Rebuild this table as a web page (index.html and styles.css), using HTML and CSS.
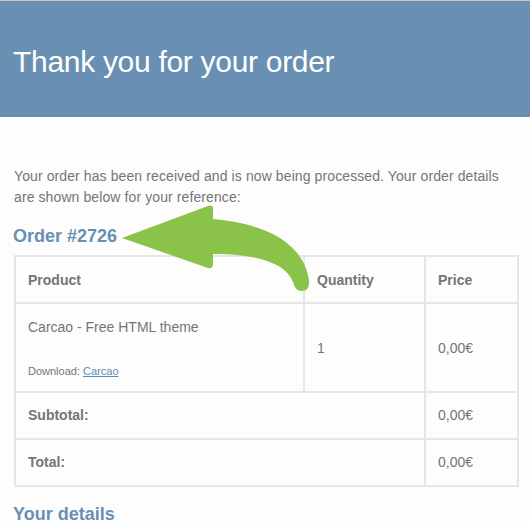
FILE: index.html
```html
<!DOCTYPE html>
<html>
<head>
<meta charset="utf-8">
<link rel="stylesheet" href="styles.css">
</head>
<body>
<div class="page">
  <header class="hero">
    <h1 class="hero-title">Thank you for your order</h1>
  </header>
  <main class="content">
    <p class="intro">Your order has been received and is now being processed. Your order details are shown below for your reference:</p>
    <h2 class="section-title">Order #2726</h2>
    <table class="order">
      <colgroup>
        <col class="c1"><col class="c2"><col class="c3">
      </colgroup>
      <thead>
        <tr><th>Product</th><th>Quantity</th><th>Price</th></tr>
      </thead>
      <tbody>
        <tr class="item">
          <td>Carcao - Free HTML theme<div class="dl">Download: <a href="#">Carcao</a></div></td>
          <td>1</td>
          <td>0,00€</td>
        </tr>
      </tbody>
      <tfoot>
        <tr><th colspan="2">Subtotal:</th><td>0,00€</td></tr>
        <tr><th colspan="2">Total:</th><td>0,00€</td></tr>
      </tfoot>
    </table>
    <h2 class="section-title details">Your details</h2>
  </main>
  <svg class="arrow" width="530" height="521" viewBox="0 0 530 521">
    <path d="M122,237 L208,205 Q213,203 213,208 L213,218 C262,222 303,240 309,279 Q310,290 302,290 Q295,290 293,281 C286,262 258,253 213,253 L213,263 Q213,268 208,267 Z" fill="#8bc34a"/>
  </svg>
</div>
</body>
</html>
```

FILE: styles.css
```css
* { box-sizing: border-box; }
html, body {
  margin: 0;
  padding: 0;
  background: #fdfdfd;
}
body {
  font-family: "Liberation Sans", Arial, Helvetica, sans-serif;
  color: #757575;
  border-top: 1px solid #c9c9c9;
}
.page {
  position: relative;
  width: 530px;
  height: 520px;
  overflow: hidden;
}
.hero {
  background: #6990b3;
  padding: 39px 13px 33px;
}
.hero-title {
  margin: 0;
  font-size: 30px;
  line-height: 44px;
  font-weight: normal;
  color: #ffffff;
  letter-spacing: -0.3px;
}
.content {
  padding: 49px 13px 0 14px;
}
.intro {
  margin: 0;
  font-size: 14px;
  line-height: 21px;
  letter-spacing: 0.1px;
}
.section-title {
  margin: 17px 0 8px -1px;
  font-size: 18px;
  line-height: 22px;
  font-weight: bold;
  color: #6990b3;
}
.details {
  margin-top: 16px;
}
.order {
  width: 503px;
  border-collapse: collapse;
  table-layout: fixed;
  font-size: 14px;
  line-height: 21px;
}
.c1 { width: 289px; }
.c2 { width: 121px; }
.c3 { width: 93px; }
.order th, .order td {
  border: 2px solid #e6e6e6;
  padding: 12px 12px;
  text-align: left;
  vertical-align: middle;
}
.order th {
  font-weight: bold;
}
.order thead th {
  padding-top: 13px;
  padding-bottom: 11px;
}
.order .item td {
  padding-top: 13px;
  padding-bottom: 12px;
}
.dl {
  margin-top: 26px;
  font-size: 11px;
  line-height: 15px;
}
.dl a {
  color: #5b8bb5;
  text-decoration: underline;
}
.arrow {
  position: absolute;
  left: 0;
  top: 0;
  pointer-events: none;
}
```
